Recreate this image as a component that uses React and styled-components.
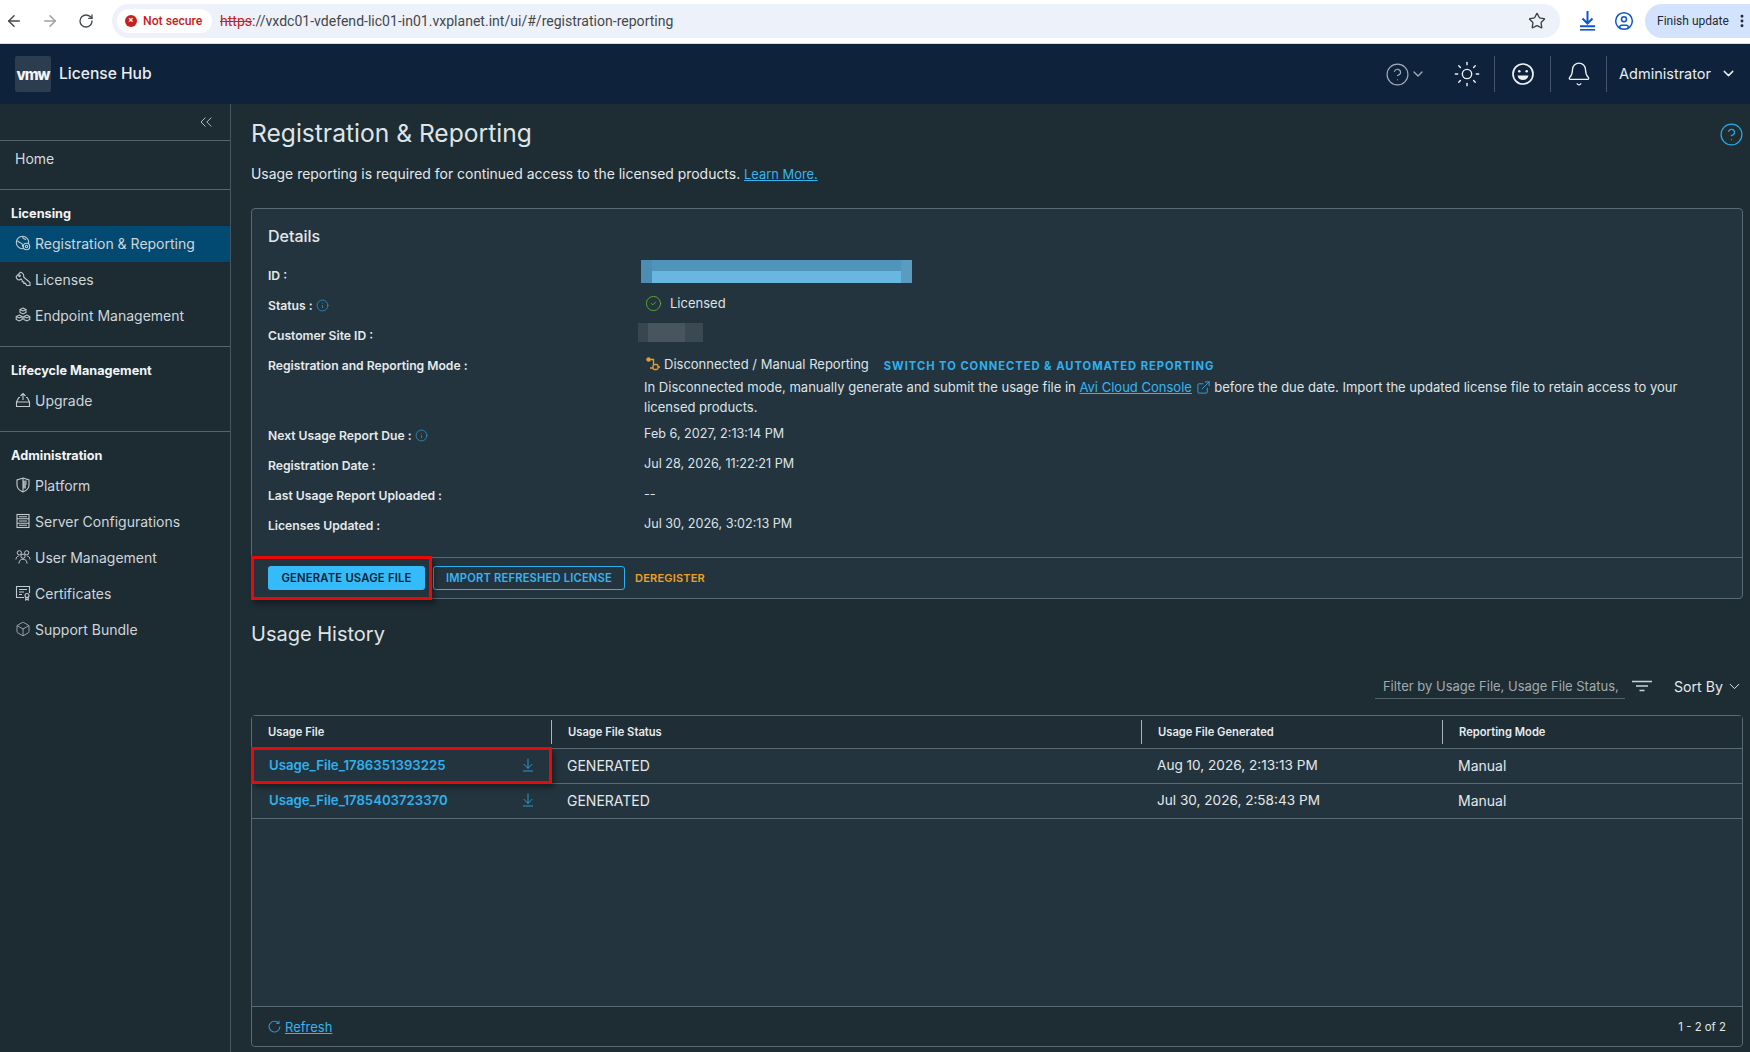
import React from 'react';
import styled, { createGlobalStyle } from 'styled-components';
import { ArrowLeft, ArrowRight, RotateCw, Star, CircleUser, EllipsisVertical, CircleHelp, ChevronDown, Sun, Bell, ChevronsLeft, Box, CircleCheck, Info, ArrowDownToLine, ExternalLink } from 'lucide-react';

const Global = createGlobalStyle`
  html, body { margin: 0; padding: 0; height: 100%; background: #1e2c34; overflow: hidden; }
  * { box-sizing: border-box; }
  body { font-family: Inter, "Open Sans", "Liberation Sans", sans-serif; color: #e3e8ea; }
`;

const Page = styled.div`display: flex; flex-direction: column; width: 1750px; height: 1052px; overflow: hidden;`;

const Chrome = styled.div`
  display: flex; align-items: center; gap: 8px; height: 44px; padding: 0 0 2px 0; background: #fff; border-bottom: 1px solid #d8dce0;
  font-family: "Roboto", "Liberation Sans", sans-serif; color: #3c4043;
`;
const NavIcon = styled.span`display: flex; justify-content: center; width: 28px; color: ${p => p.$dim ? '#9aa0a6' : '#45494d'};`;
const UrlPill = styled.div`
  display: flex; align-items: center; flex: 1; height: 34px; margin-left: 4px; padding: 0 14px 0 5px; border-radius: 17px; background: #edf2fa; font-size: 14.05px;
`;
const SecurePill = styled.div`
  display: flex; align-items: center; gap: 6px; height: 24px; width: 95px; padding: 0 0 0 8px; border-radius: 12px; background: #fff; color: #c5221f; font-size: 12.2px; font-weight: 500;
`;
const SecureDot = styled.span`
  display: flex; align-items: center; justify-content: center; width: 12px; height: 12px; border-radius: 50%; background: #c5221f; color: #fff; font-size: 9px; font-weight: 700; line-height: 1;
`;
const UrlText = styled.span`margin-left: 8px; color: #44474a; flex: 1;`;
const Struck = styled.span`color: #c5221f; text-decoration: line-through;`;
const ChromeRight = styled.div`display: flex; align-items: center; margin-left: 11px;`;
const ChromeBlue = styled.span`display: flex; color: #0b57d0; margin-right: ${p => p.$mr}px;`;
const UpdatePill = styled.div`
  display: flex; align-items: center; justify-content: space-between; width: 105px; height: 34px; padding: 0 0 0 12px; border-radius: 17px 0 0 17px; background: #d3e3fd; font-size: 12px; color: #1f2a37;
`;

const Header = styled.header`display: flex; align-items: center; height: 60px; padding: 0 13px 0 15px; background: #0e233b; color: #fff;`;
const Logo = styled.div`
  display: flex; align-items: center; justify-content: center; width: 36px; height: 36px; border-radius: 2px; background: #2c3d50; font-size: 15px; font-weight: 800; letter-spacing: -1px; color: #f2f4f6;
`;
const Brand = styled.div`margin-left: 8px; padding-bottom: 2px; font-size: 15.6px; font-weight: 500; color: #e9edf0; flex: 1;`;
const HeadIcon = styled.div`display: flex; align-items: center; justify-content: center; width: ${p => p.$w}px; margin-right: ${p => p.$mr || 0}px; color: ${p => p.$dim ? '#a3adb5' : '#eef1f3'};`;
const HeadDivider = styled.span`width: 1px; height: 36px; background: #45566a;`;
const Admin = styled.div`display: flex; align-items: center; gap: 9px; margin-left: 12px; padding-bottom: 1px; font-size: 14.5px; color: #e9edf0;`;

const Body = styled.div`display: flex; flex: 1; min-height: 0;`;
const Sidebar = styled.nav`width: 231px; flex: none; border-right: 1px solid #46565f; background: #1d2b33;`;
const Collapse = styled.div`display: flex; justify-content: flex-end; align-items: center; height: 37px; padding: 0 14px 0 0; color: #c6ced2; border-bottom: 1px solid #56646c;`;
const HomeRow = styled.div`height: 49px; padding: 0 15px; line-height: 36px; font-size: 14px; color: #d5dbde; border-bottom: 1px solid #56646c;`;
const Section = styled.section`border-bottom: ${p => p.$last ? 'none' : '1px solid #56646c'}; padding-bottom: ${p => p.$pb}px;`;
const SectionLabel = styled.div`height: 36px; padding: 15px 0 0 11px; font-size: 12.7px; line-height: 18px; font-weight: 700; color: #f2f5f6;`;
const NavItem = styled.div`
  display: flex; align-items: center; gap: 4px; height: 36px; padding: 0 0 2px 15px; font-size: 14px; color: #cfd6da;
  background: ${p => p.$active ? '#024a72' : 'transparent'};
  svg { flex: none; color: #c2cbd0; }
`;

const Main = styled.main`flex: 1; min-width: 0; padding: 0 7px 0 20px; display: flex; flex-direction: column;`;
const TitleRow = styled.div`display: flex; justify-content: space-between; align-items: center; height: 60px; padding-bottom: 2px;`;
const Title = styled.h1`margin: 0; font-size: 24.6px; font-weight: 400; color: #dfe4e7;`;
const HelpIcon = styled.span`display: flex; margin: 2px -1px 0 0; color: #2aa9e0;`;
const Intro = styled.p`margin: 0; height: 44px; line-height: 20px; font-size: 13.95px; color: #e3e8ea;`;
const Link = styled.a`color: #36b4f0; text-decoration: underline;`;
const SmallLink = styled(Link)`font-size: 12.9px;`;

const Card = styled.section`border: 1px solid #5a6a72; border-radius: 4px; background: #24343e;`;
const CardBody = styled.div`padding: 15px 16px 17px 16px;`;
const CardTitle = styled.h2`margin: 0 0 10px; height: 26px; line-height: 24px; font-size: 16px; font-weight: 500; color: #e3e8ea;`;
const DetailRow = styled.div`display: grid; grid-template-columns: 376px 1fr; min-height: ${p => p.$h || 30}px;`;
const Label = styled.div`display: flex; align-items: center; gap: 3px; height: 30px; font-size: 12.15px; font-weight: 600; color: #e5eaec;`;
const Value = styled.div`font-size: ${p => p.$fs || 13}px; line-height: ${p => p.$lh || 26}px; color: #dde3e6;`;
const IdBlur = styled.div`
  width: 271px; height: 23px; margin-left: -3px;
  background: linear-gradient(90deg, #4c8db3 0 4%, transparent 4% 96%, #5a9cc0 96%), linear-gradient(180deg, #4f95bb 0 50%, #68b7e1 50%);
`;
const SiteBlur = styled.div`
  width: 65px; height: 19px; margin: 3px 0 0 -6px;
  background: linear-gradient(90deg, #37464f 0 15%, #48555e 15% 73%, #3b4a52 73%);
`;
const StatusLine = styled.div`display: flex; align-items: center; gap: 8px; padding-left: 1px;`;
const ModeLine = styled.div`display: flex; align-items: center; height: 28px; padding-left: 1px;`;
const ModeText = styled.span`margin-left: 3px;`;
const SwitchLink = styled.span`margin-left: 15px; padding-top: 3px; font-size: 11.2px; font-weight: 700; letter-spacing: .97px; color: #2fb0ee;`;
const ModeNote = styled.p`margin: -1px 0 0; line-height: 20px; font-size: 13.02px; color: #dde3e6; max-width: 1090px;`;

const ActionBar = styled.div`position: relative; display: flex; align-items: center; height: 41px; padding-left: 16px; border-top: 1px solid #5a6a72;`;
const Primary = styled.button`
  height: 24px; width: 157px; padding: 0; border: none; border-radius: 3px; background: #35bbfa; color: #06222f; font: 600 11.25px Inter, sans-serif; letter-spacing: .2px;
`;
const Outline = styled.button`
  height: 24px; width: 192px; margin-left: 8px; padding: 0; border: 1px solid #2fb0ee; border-radius: 3px; background: transparent; color: #35b5f3; font: 600 11.15px Inter, sans-serif; letter-spacing: .2px;
`;
const Flat = styled.button`
  margin-left: 10px; padding: 0; border: none; background: none; color: #f0a020; font: 600 11px Inter, sans-serif; letter-spacing: .2px;
`;
const Annot = styled.span`
  position: absolute; pointer-events: none; border: 3px solid #e60a0a; box-shadow: 3px 4px 5px rgba(0,0,0,.35);
  left: ${p => p.$l}px; top: ${p => p.$t}px; width: ${p => p.$w}px; height: ${p => p.$h}px;
`;

const SubHead = styled.h2`margin: 0; height: 49px; padding-top: 20px; line-height: 30px; font-size: 20px; font-weight: 400; color: #dfe4e7; box-sizing: content-box;`;
const Toolbar = styled.div`display: flex; align-items: center; justify-content: flex-end; height: 40px; margin-top: -2px;`;
const Filter = styled.div`display: flex; align-items: center; width: 250px; height: 26px; padding-left: 8px; border-bottom: 1px solid #56646c; font-size: 13px; color: #a0abb1; white-space: nowrap; overflow: hidden;`;
const FilterIcon = styled.span`display: flex; margin-left: 6px; color: #ccd3d7;`;
const Sort = styled.div`display: flex; align-items: center; gap: 3px; margin-left: 21px; font-size: 14.2px; color: #e3e8ea;`;

const TableWrap = styled.section`position: relative; display: flex; flex-direction: column; flex: none; height: 332px; margin-top: 9px; border: 1px solid #5a6a72; border-radius: 4px; background: #24343e;`;
const Grid = styled.div`display: grid; grid-template-columns: 299px 590px 301px 1fr; align-items: center; height: ${p => p.$h}px; padding-bottom: ${p => p.$pb || 0}px; border-bottom: 1px solid #5a6a72; background: ${p => p.$head ? '#1f2d36' : 'transparent'};`;
const HeadCell = styled.div`
  height: 24px; line-height: 24px; padding-left: 16px; font-size: 11.2px; font-weight: 600; color: #e5eaec;
  border-left: ${p => p.$first ? 'none' : '1px solid #aab3b8'};
`;
const Cell = styled.div`padding-left: 16px; font-size: ${p => p.$fs || 14}px; color: #e3e8ea;`;
const FileCell = styled.div`display: flex; align-items: center; justify-content: space-between; padding: 0 15px 0 17px; font-size: 13.2px; font-weight: 600; color: #2fb0ee;`;
const Filler = styled.div`flex: 1;`;
const Footer = styled.footer`display: flex; align-items: center; justify-content: space-between; height: 40px; padding: 0 16px; border-top: 1px solid #5a6a72; background: #1e2c34; border-radius: 0 0 4px 4px; font-size: 11.4px;`;
const RefreshWrap = styled.div`display: flex; align-items: center; gap: 4px; font-size: 13px; color: #36b4f0; svg { color: #2b94c8; }`;

const S = 16;
const sw = 1.1;
const IconGlobe = () => (
  <svg width={S} height={S} viewBox="0 0 16 16" fill="none" stroke="currentColor" strokeWidth={sw}>
    <circle cx="7.5" cy="7.5" r="6.2" />
    <path d="M2 6c2 0 2 2 4 2s1 3 2 4M8 1.5C7 3 9 4 11 4.5" />
    <circle cx="11.5" cy="11.5" r="3.2" fill="#024a72" />
    <circle cx="11.5" cy="11.5" r="1.2" />
  </svg>
);
const IconKey = () => (
  <svg width={S} height={S} viewBox="0 0 16 16" fill="none" stroke="currentColor" strokeWidth={sw}>
    <path d="M5.500 1.200L1.200 5.500c0 2 1.300 3.300 3.300 3.500L6 8l1.200 1.200v1.600h1.600V12.400h1.600l1.400 2.100h3.200v-2.900L8.800 6.200C9 3.800 7.600 1.800 5.500 1.200z" />
    <circle cx="4.500" cy="4.800" r=".8" />
  </svg>
);
const IconCubes = () => (
  <svg width={S} height={S} viewBox="0 0 16 16" fill="none" stroke="currentColor" strokeWidth={sw}>
    <path d="M8 1l3 1.500v3L8 7 5 5.500v-3zM4.200 8l3 1.500v3l-3 1.500-3-1.500v-3zM11.800 8l3 1.500v3l-3 1.500-3-1.500v-3z" />
    <path d="M5 2.500l3 1.500 3-1.500M1.200 9.500l3 1.500 3-1.500M8.800 9.500l3 1.500 3-1.500" />
  </svg>
);
const IconUpgrade = () => (
  <svg width={S} height={S} viewBox="0 0 16 16" fill="none" stroke="currentColor" strokeWidth={sw}>
    <path d="M8 8V1.500M5.500 4L8 1.500 10.500 4M5 5.500H3.800L1.500 10v4.500h13V10l-2.300-4.500H11M1.500 10h13" />
  </svg>
);
const IconShield = () => (
  <svg width={S} height={S} viewBox="0 0 16 16" fill="none" stroke="currentColor" strokeWidth={sw}>
    <path d="M8 1l6 2v5c0 3.500-3 5.800-6 7-3-1.200-6-3.500-6-7V3z" />
    <path d="M8 1v14" />
    <path d="M8 3.500h3.600v4.500H8zM8 8h3v3.500H8z" fill="currentColor" stroke="none" opacity=".75" />
  </svg>
);
const IconServer = () => (
  <svg width={S} height={S} viewBox="0 0 16 16" fill="none" stroke="currentColor" strokeWidth={sw}>
    <rect x="2" y="1.500" width="12" height="13" />
    <path d="M2 5.800h12M2 10.200h12M4 3.700h8M4 8h8M4 12.300h8" />
  </svg>
);
const IconPeople = () => (
  <svg width={S} height={S} viewBox="0 0 16 16" fill="none" stroke="currentColor" strokeWidth={1}>
    <circle cx="4.300" cy="3.800" r="2.100" />
    <circle cx="11.700" cy="3.800" r="2.100" />
    <circle cx="8" cy="7.200" r="2.100" />
    <path d="M1 10.500c0-2 1-3.200 2.800-3.400M15 10.500c0-2-1-3.200-2.800-3.400M4 14.500c0-2.800 1.600-4.300 4-4.300s4 1.500 4 4.300" />
  </svg>
);
const IconCert = () => (
  <svg width={S} height={S} viewBox="0 0 16 16" fill="none" stroke="currentColor" strokeWidth={sw}>
    <path d="M9 12.500H1.500v-11h13V8" />
    <path d="M4 4.500h8M4 7h5M4 9.500h3" />
    <circle cx="12" cy="10.500" r="2" />
    <path d="M10.800 12.300V15l1.200-.8 1.200.8v-2.700" />
  </svg>
);
const IconConnect = () => (
  <svg width="16" height="16" viewBox="0 0 16 16" fill="none" stroke="#e6a030" strokeWidth="1.300">
    <circle cx="3.500" cy="3.500" r="1.600" fill="#e6a030" />
    <path d="M5 3.500h3.500v5M8 12h-3" />
    <rect x="8" y="8.500" width="5" height="5" rx="1.500" />
    <path d="M13 11h2" />
  </svg>
);
const IconSmile = () => (
  <svg width="24" height="24" viewBox="0 0 24 24" fill="none" stroke="currentColor" strokeWidth="1.700">
    <circle cx="12" cy="12" r="10" />
    <circle cx="8.300" cy="9.300" r="1.300" fill="currentColor" stroke="none" />
    <circle cx="15.700" cy="9.300" r="1.300" fill="currentColor" stroke="none" />
    <path d="M6.500 13.500h11c-.6 3-2.800 4.500-5.500 4.500s-4.900-1.500-5.500-4.500z" fill="currentColor" stroke="none" />
  </svg>
);
const IconFilter = () => (
  <svg width="22" height="12" viewBox="0 0 22 12" fill="none" stroke="currentColor" strokeWidth="1.600">
    <path d="M1 1.500h20M5 6h12M8.500 10.500h5" />
  </svg>
);
const IconDownload = () => (
  <svg width="17" height="21" viewBox="0 0 17 21" fill="none" stroke="#0b57d0" strokeWidth="2">
    <path d="M8.500 1v12M3.500 8.500l5 5 5-5M1 16.200h15" />
    <path d="M1 19.800h15" strokeWidth="1.600" />
  </svg>
);
const IconRefresh = () => (
  <svg width="13" height="13" viewBox="0 0 14 14" fill="none" stroke="currentColor" strokeWidth="1.200">
    <path d="M11.500 3.500A5.800 5.800 0 1 0 12.800 7" />
    <path d="M8.800 3.700h3V.800" />
  </svg>
);

const Tip = () => <Info size={13} strokeWidth={1.3} color="#2f9fd6" />;

const NavRow = ({ icon, label, active }) => <NavItem $active={active}>{icon}<span>{label}</span></NavItem>;

const details = [
  ['Next Usage Report Due :', 'Feb 6, 2027, 2:13:14 PM', true],
  ['Registration Date :', 'Jul 28, 2026, 11:22:21 PM'],
  ['Last Usage Report Uploaded :', '--'],
  ['Licenses Updated :', 'Jul 30, 2026, 3:02:13 PM'],
];
const rows = [
  ['Usage_File_1786351393225', 'GENERATED', 'Aug 10, 2026, 2:13:13 PM', 'Manual'],
  ['Usage_File_1785403723370', 'GENERATED', 'Jul 30, 2026, 2:58:43 PM', 'Manual'],
];

export default function App() {
  return (
    <Page>
      <Global />
      <Chrome>
        <NavIcon><ArrowLeft size={18} /></NavIcon>
        <NavIcon $dim><ArrowRight size={18} /></NavIcon>
        <NavIcon><RotateCw size={16} /></NavIcon>
        <UrlPill>
          <SecurePill><SecureDot>×</SecureDot>Not secure</SecurePill>
          <UrlText><Struck>https</Struck>://vxdc01-vdefend-lic01-in01.vxplanet.int/ui/#/registration-reporting</UrlText>
          <Star size={18} strokeWidth={1.8} />
        </UrlPill>
        <ChromeRight>
          <ChromeBlue $mr={18}><IconDownload /></ChromeBlue>
          <ChromeBlue $mr={11}><CircleUser size={20} strokeWidth={1.8} /></ChromeBlue>
          <UpdatePill>Finish update<EllipsisVertical size={16} strokeWidth={2.4} /></UpdatePill>
        </ChromeRight>
      </Chrome>
      <Header>
        <Logo>vmw</Logo>
        <Brand>License Hub</Brand>
        <HeadIcon $w={25} $dim><CircleHelp size={25} strokeWidth={1.1} /></HeadIcon>
        <HeadIcon $w={16} $mr={13} $dim><ChevronDown size={16} /></HeadIcon>
        <HeadIcon $w={55}><Sun size={28} strokeWidth={1.2} /></HeadIcon>
        <HeadDivider />
        <HeadIcon $w={55}><IconSmile /></HeadIcon>
        <HeadDivider />
        <HeadIcon $w={55}><Bell size={26} strokeWidth={1.2} /></HeadIcon>
        <HeadDivider />
        <Admin>Administrator<ChevronDown size={17} /></Admin>
      </Header>
      <Body>
        <Sidebar>
          <Collapse><ChevronsLeft size={20} strokeWidth={1.1} /></Collapse>
          <HomeRow>Home</HomeRow>
          <Section $pb={12}>
            <SectionLabel>Licensing</SectionLabel>
            <NavRow active icon={<IconGlobe />} label="Registration & Reporting" />
            <NavRow icon={<IconKey />} label="Licenses" />
            <NavRow icon={<IconCubes />} label="Endpoint Management" />
          </Section>
          <Section $pb={12}>
            <SectionLabel>Lifecycle Management</SectionLabel>
            <NavRow icon={<IconUpgrade />} label="Upgrade" />
          </Section>
          <Section $last>
            <SectionLabel>Administration</SectionLabel>
            <NavRow icon={<IconShield />} label="Platform" />
            <NavRow icon={<IconServer />} label="Server Configurations" />
            <NavRow icon={<IconPeople />} label="User Management" />
            <NavRow icon={<IconCert />} label="Certificates" />
            <NavRow icon={<Box size={16} strokeWidth={1.1} />} label="Support Bundle" />
          </Section>
        </Sidebar>
        <Main>
          <TitleRow>
            <Title>Registration &amp; Reporting</Title>
            <HelpIcon><CircleHelp size={25} strokeWidth={1.2} /></HelpIcon>
          </TitleRow>
          <Intro>Usage reporting is required for continued access to the licensed products. <SmallLink>Learn More.</SmallLink></Intro>
          <Card>
            <CardBody>
              <CardTitle>Details</CardTitle>
              <DetailRow>
                <Label>ID :</Label>
                <IdBlur />
              </DetailRow>
              <DetailRow>
                <Label>Status : <Tip /></Label>
                <Value $lh={27}>
                  <StatusLine><CircleCheck size={17} strokeWidth={1.2} color="#5cb82e" />Licensed</StatusLine>
                </Value>
              </DetailRow>
              <DetailRow>
                <Label>Customer Site ID :</Label>
                <SiteBlur />
              </DetailRow>
              <DetailRow $h={70}>
                <Label>Registration and Reporting Mode :</Label>
                <Value>
                  <ModeLine>
                    <IconConnect />
                    <ModeText>Disconnected / Manual Reporting</ModeText>
                    <SwitchLink>SWITCH TO CONNECTED &amp; AUTOMATED REPORTING</SwitchLink>
                  </ModeLine>
                  <ModeNote>
                    In Disconnected mode, manually generate and submit the usage file in <Link>Avi Cloud Console</Link> <ExternalLink size={15} strokeWidth={1.3} color="#36b4f0" style={{ verticalAlign: -3 }} /> before the due date. Import the updated license file to retain access to your licensed products.
                  </ModeNote>
                </Value>
              </DetailRow>
              {details.map(([k, v, tip]) => (
                <DetailRow key={k}>
                  <Label>{k} {tip && <Tip />}</Label>
                  <Value $fs={12.6} $lh={27}>{v}</Value>
                </DetailRow>
              ))}
            </CardBody>
            <ActionBar>
              <Primary>GENERATE USAGE FILE</Primary>
              <Outline>IMPORT REFRESHED LICENSE</Outline>
              <Flat>DEREGISTER</Flat>
              <Annot $l={-1} $t={-2} $w={181} $h={44} />
            </ActionBar>
          </Card>
          <SubHead>Usage History</SubHead>
          <Toolbar>
            <Filter>Filter by Usage File, Usage File Status,</Filter>
            <FilterIcon><IconFilter /></FilterIcon>
            <Sort>Sort By<ChevronDown size={17} strokeWidth={1.4} /></Sort>
          </Toolbar>
          <TableWrap>
            <Grid $head $h={33}>
              <HeadCell $first>Usage File</HeadCell>
              <HeadCell>Usage File Status</HeadCell>
              <HeadCell>Usage File Generated</HeadCell>
              <HeadCell>Reporting Mode</HeadCell>
            </Grid>
            {rows.map(r => (
              <Grid key={r[0]} $h={35} $pb={2}>
                <FileCell>{r[0]}<ArrowDownToLine size={16} strokeWidth={1.2} /></FileCell>
                <Cell>{r[1]}</Cell>
                <Cell $fs={13.6}>{r[2]}</Cell>
                <Cell>{r[3]}</Cell>
              </Grid>
            ))}
            <Filler />
            <Footer>
              <RefreshWrap><IconRefresh /><Link>Refresh</Link></RefreshWrap>
              <span>1 - 2 of 2</span>
            </Footer>
            <Annot $l={-1} $t={31} $w={301} $h={37} />
          </TableWrap>
        </Main>
      </Body>
    </Page>
  );
}
